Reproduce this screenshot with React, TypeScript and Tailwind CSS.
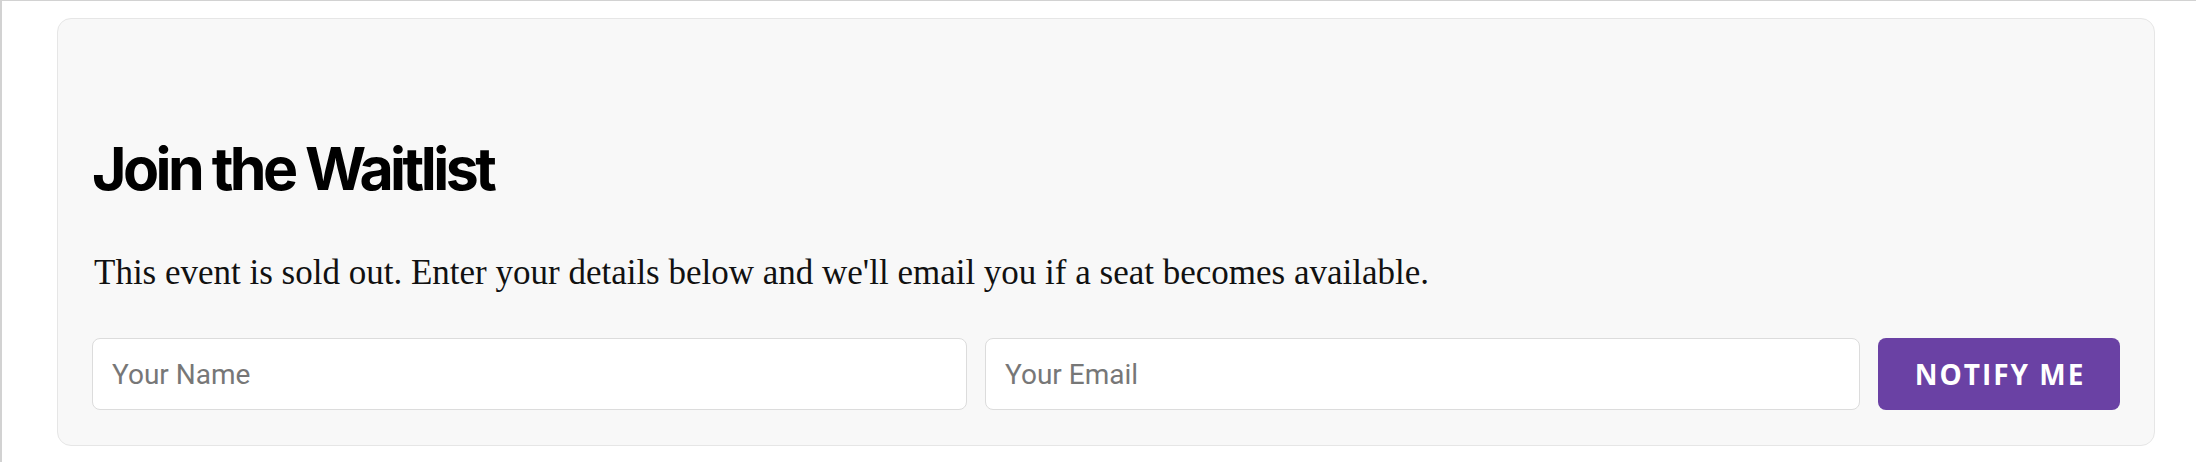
export default function App() {
  return (
    <div className="h-screen bg-white border-t border-l-2 border-[#d2d2d2] pt-[17px] pl-[55px] pr-[41px]">
      <div className="rounded-[14px] border border-[#e6e6e6] bg-[#f8f8f8] px-[34px] pt-[120px] pb-[35px]">
        <h2 className="font-['Inter',sans-serif] text-[59px] font-bold leading-none tracking-[-0.06em] text-black">
          Join the Waitlist
        </h2>
        <p className="mt-[55px] ml-[2px] font-['Liberation_Serif',serif] text-[35px] leading-[40px] text-[#111]">
          This event is sold out. Enter your details below and we'll email you if a seat becomes available.
        </p>
        <form className="mt-[45px] flex gap-[18px]" onSubmit={(e) => e.preventDefault()}>
          <input
            type="text"
            placeholder="Your Name"
            className="h-[72px] min-w-0 flex-1 rounded-[8px] border border-[#dcdcdc] bg-white px-[19px] font-['Roboto',sans-serif] text-[28px] text-black placeholder:text-[#777] outline-none"
          />
          <input
            type="email"
            placeholder="Your Email"
            className="h-[72px] min-w-0 flex-1 rounded-[8px] border border-[#dcdcdc] bg-white px-[19px] font-['Roboto',sans-serif] text-[28px] text-black placeholder:text-[#777] outline-none"
          />
          <button
            type="submit"
            className="h-[72px] w-[242px] shrink-0 rounded-[8px] bg-[#6a41a4] pl-[2px] font-['Open_Sans',sans-serif] text-[28px] font-bold uppercase tracking-[2px] text-white"
          >
            Notify Me
          </button>
        </form>
      </div>
    </div>
  );
}
